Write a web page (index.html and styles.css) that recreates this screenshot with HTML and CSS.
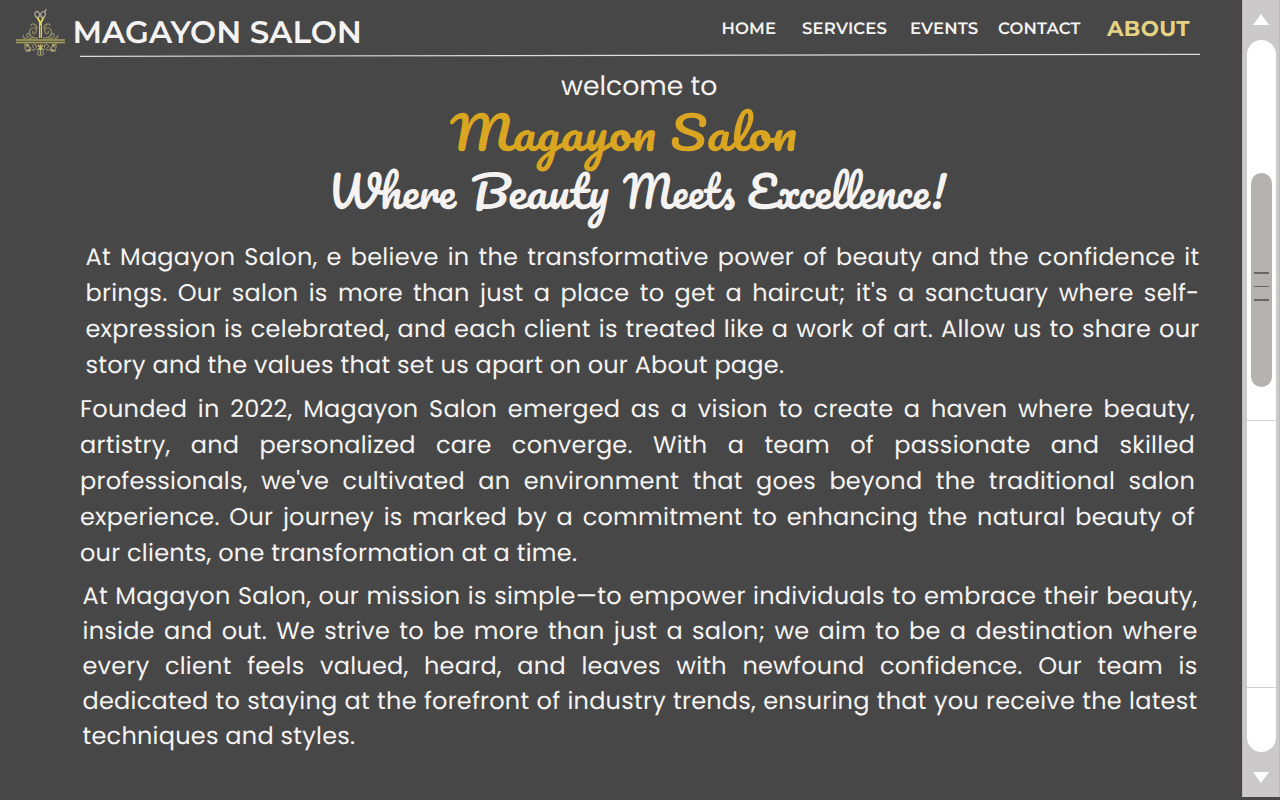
FILE: index.html
```html
<!DOCTYPE html>
<html lang="en">
<head>
<meta charset="utf-8">
<title>Magayon Salon</title>
<link rel="stylesheet" href="styles.css">
</head>
<body>
<div class="page">
  <header class="header">
    <svg class="logo" viewBox="0 0 50 48" fill="none" stroke="#bbb35c" stroke-width="1">
      <g stroke="#a9a894" stroke-width="1.3">
        <ellipse cx="21.2" cy="5.5" rx="2.3" ry="3" transform="rotate(-18 21.2 5.5)"/>
        <ellipse cx="27" cy="5.5" rx="2.3" ry="3" transform="rotate(18 27 5.5)"/>
        <path d="M28.500 3l2-3"/>
      </g>
      <path d="M21.500 8.500l3 6 3-6" stroke="#e0d45a" stroke-width="1.800"/>
      <path d="M24.500 14v15" stroke="#d8cc59" stroke-width="3"/>
      <path d="M24.500 16v13" stroke="#656240" stroke-width=".7"/>
      <path stroke="#8f8c61" stroke-width="1.200" d="M22 29c-5 1-10-3-8-8 2-4 8-2 6 2-1 3-5 1-3-1M27 29c5 1 10-3 8-8-2-4-8-2-6 2 1 3 5 1 3-1M21 20c0-5-6-7-6-3M28 20c0-5 6-7 6-3M17 29c-4 1-7-1-6-4 2-2 4 1 2 2M32 29c4 1 7-1 6-4-2-2-4 1-2 2M11 29c-3 1-5-2-3-3M38 29c3 1 5-2 3-3"/>
      <path stroke="#aaa359" stroke-width="1.300" d="M0 31h49M0 33.500h49"/>
      <path stroke="#a6a079" d="M9 34v5c0 3 5 3 5 0s-4-2-3 0M40 34v5c0 3-5 3-5 0s4-2 3 0M9 42h5v-4M40 42h-5v-4M14 40c4 3 8-1 6-4-3-2-5 2-2 3M35 40c-4 3-8-1-6-4 3-2 5 2 2 3M24.500 35v11M24.500 41c-4-3-4 2-1 2M24.500 41c4-3 4 2 1 2M24.500 46c-4 1-4-3-2-2M24.500 46c4 1 4-3 2-2"/>
      <path stroke="#d3c96c" stroke-width="1.300" d="M22 36l2.500 3 2.500-3M22.500 40h4M10 36h3M36 36h3M11 41l3 1M38 41l-3 1"/>
    </svg>
    <h1 class="brand">MAGAYON SALON</h1>
    <nav class="nav">
      <a class="link home">HOME</a>
      <a class="link services">SERVICES</a>
      <a class="link events">EVENTS</a>
      <a class="link contact">CONTACT</a>
      <a class="link about">ABOUT</a>
    </nav>
  </header>
  <svg class="rule" viewBox="0 0 1120 4"><path d="M0 3.300L1120 1.300" stroke="#dededc" stroke-width="1.200"/></svg>
  <main class="content">
    <p class="welcome">welcome to</p>
    <svg class="script" viewBox="0 0 1242 120">
      <g class="gold">
        <text x="450" y="49" textLength="206" lengthAdjust="spacingAndGlyphs">Magayon</text>
        <text x="670" y="49" textLength="127" lengthAdjust="spacingAndGlyphs">Salon</text>
      </g>
      <g class="tagline">
        <text x="328" y="107" textLength="128" lengthAdjust="spacingAndGlyphs">Where</text>
        <text x="471" y="107" textLength="138" lengthAdjust="spacingAndGlyphs">Beauty</text>
        <text x="623" y="107" textLength="112" lengthAdjust="spacingAndGlyphs">Meets</text>
        <text x="747" y="107" textLength="199" lengthAdjust="spacingAndGlyphs">Excellence!</text>
      </g>
    </svg>
    <p class="para intro">
      <span>At Magayon Salon, e believe in the transformative power of beauty and the confidence it</span>
      <span>brings. Our salon is more than just a place to get a haircut; it's a sanctuary where self-</span>
      <span>expression is celebrated, and each client is treated like a work of art. Allow us to share our</span>
      <span class="last">story and the values that set us apart on our About page.</span>
    </p>
    <p class="para founded">
      <span>Founded in 2022, Magayon Salon emerged as a vision to create a haven where beauty,</span>
      <span>artistry, and personalized care converge. With a team of passionate and skilled</span>
      <span>professionals, we've cultivated an environment that goes beyond the traditional salon</span>
      <span>experience. Our journey is marked by a commitment to enhancing the natural beauty of</span>
      <span class="last">our clients, one transformation at a time.</span>
    </p>
    <p class="para mission">
      <span>At Magayon Salon, our mission is simple—to empower individuals to embrace their beauty,</span>
      <span>inside and out. We strive to be more than just a salon; we aim to be a destination where</span>
      <span>every client feels valued, heard, and leaves with newfound confidence. Our team is</span>
      <span>dedicated to staying at the forefront of industry trends, ensuring that you receive the latest</span>
      <span class="last">techniques and styles.</span>
    </p>
  </main>
</div>
<aside class="scrollbar">
  <svg class="arrow" viewBox="0 0 16 11"><path d="M8 0l8 11H0z" fill="#fff"/></svg>
  <div class="track">
    <div class="thumb"><i></i><i></i><i></i></div>
    <div class="mark upper"></div>
    <div class="mark lower"></div>
  </div>
  <svg class="arrow" viewBox="0 0 16 11"><path d="M0 0h16L8 11z" fill="#fff"/></svg>
</aside>
</body>
</html>
```
FILE: styles.css
```css
* { box-sizing: border-box; }
body {
  margin: 0;
  width: 1280px;
  height: 800px;
  overflow: hidden;
  display: flex;
  background: #474747;
  color: #f5f3f2;
  font-family: Poppins, Inter, "Open Sans", sans-serif;
  text-rendering: geometricPrecision;
}
.page { width: 1242px; height: 800px; }
.header { display: flex; height: 53px; padding-left: 16px; font-family: Montserrat, Inter, sans-serif; }
.logo { width: 50px; height: 48px; margin-top: 9px; flex: none; }
.brand { margin: 12px 0 0 6.500px; width: 300px; font-size: 31px; line-height: 40px; font-weight: 600; letter-spacing: 0; white-space: nowrap; }
.nav { display: flex; margin-left: 349px; height: 57px; align-items: center; }
.link { font-size: 16.5px; font-weight: 600; letter-spacing: 0.15px; white-space: nowrap; flex: none; }
.home { width: 80.500px; }
.services { width: 108px; }
.events { width: 88px; }
.contact { width: 109px; }
.about { font-size: 21.5px; font-weight: 700; color: #e5d283; letter-spacing: 0.4px; }
.rule { display: block; width: 1120px; height: 4px; margin-left: 80px; }
.welcome { margin: 8px 0 0; padding-left: 561px; height: 37px; font-size: 26.7px; line-height: 43px; }
.script { display: block; width: 1242px; height: 120px; overflow: visible; font-family: "Pacifico", "Kaushan Script", cursive; }
.gold { fill: #daa520; font-size: 45px; }
.tagline { fill: #f5f3f2; font-size: 43px; }
.para { margin: 0; font-size: 24px; line-height: 36px; letter-spacing: 0.24px; }
.para span { display: block; text-align-last: justify; white-space: nowrap; }
.para .last { text-align-last: left; }
.intro { width: 1114px; margin: 18px 0 0 85.500px; }
.founded { width: 1115px; margin: 8px 0 0 80px; }
.mission { width: 1115px; margin: 7px 0 0 82.500px; line-height: 35px; }
.scrollbar { width: 38px; height: 797px; display: flex; flex-direction: column; align-items: center; background: #cbc9ca; border-left: 1px solid #bdbbbc; border-right: 1px solid #bdbbbc; padding-top: 14px; }
.arrow { display: block; width: 16px; height: 11px; flex: none; }
.track { position: relative; width: 29px; height: 712px; flex: none; margin: 15px 0 20px; border-radius: 14.500px; background: #fff; }
.thumb { position: absolute; top: 133px; left: 4px; width: 21px; height: 214px; border-radius: 10.500px; background: #b5b1b1; display: flex; flex-direction: column; align-items: center; gap: 12px; padding-top: 99px; }
.thumb i { width: 15px; height: 1.500px; background: #686666; }
.mark { position: absolute; left: 0; width: 29px; height: 1px; background: #d2d1d1; }
.upper { top: 380px; }
.lower { top: 647px; }
```
